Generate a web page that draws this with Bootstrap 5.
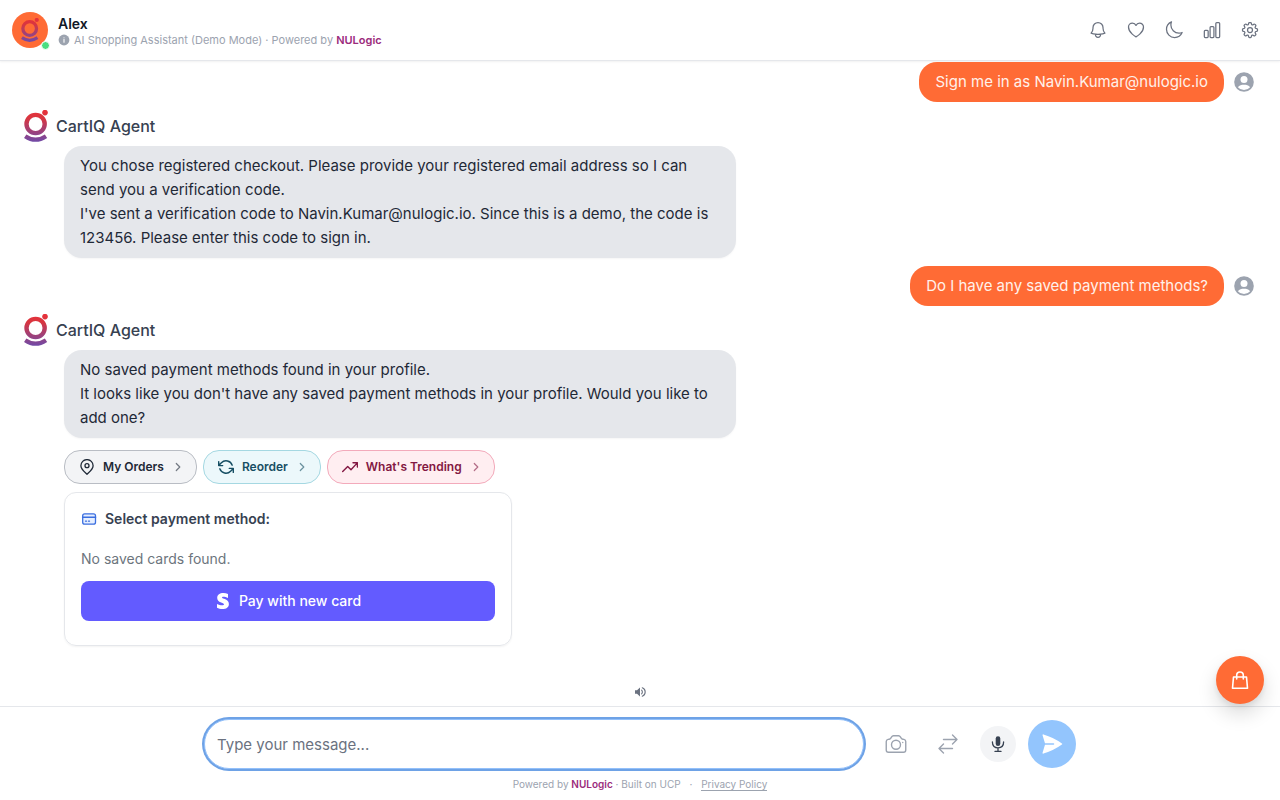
<!DOCTYPE html>
<html lang="en">
<head>
<meta charset="utf-8">
<meta name="viewport" content="width=device-width, initial-scale=1">
<title>CartIQ Agent</title>
<link href="https://cdn.jsdelivr.net/npm/bootstrap@5.3.0/dist/css/bootstrap.min.css" rel="stylesheet">
<style>
  body { font-family: Inter, "Liberation Sans", sans-serif; font-size: 15px; line-height: 24px; color: #1f2937; background: #fff; }
  svg { display: block; flex: none; fill: none; stroke: currentColor; stroke-linecap: round; stroke-linejoin: round; }
  button { font-family: inherit; }
  .icon-btn { border: 0; background: none; padding: 0; display: flex; align-items: center; justify-content: center; color: #6b7280; }
  .topbar { height: 61px; padding: 0 12px; border-bottom: 1px solid #e5e7eb; box-shadow: 0 1px 2px rgba(0,0,0,.06); }
  .identity { gap: 10px; }
  .topbar h1 { font-size: 14px; line-height: 20px; font-weight: 600; color: #111827; }
  .avatar { width: 36px; height: 36px; background: #ff6b35; }
  .online { right: -2px; bottom: -2px; width: 9px; height: 9px; background: #4ade80; border: 1px solid #fff; }
  .tagline { font-size: 11px; line-height: 12px; color: #9ca3af; gap: 4px; }
  .brand-name { color: #9b2c7c; font-weight: 600; }
  .top-tools { gap: 2px; }
  .top-tools .icon-btn { width: 36px; height: 36px; }
  .chat { padding: 1px 24px 0; gap: 8px; }
  .bubble { border-radius: 18px; padding: 8px 16px; }
  .bubble-user { background: #ff6b35; color: #fff1eb; }
  .bubble-agent { background: #e5e7eb; max-width: 672px; margin-top: 4px; box-shadow: 0 1px 2px rgba(0,0,0,.04); }
  .user-row { gap: 10px; padding-right: 2px; color: #9ca3af; }
  .agent-body { padding-left: 40px; }
  .agent-name { font-size: 16px; font-weight: 500; color: #374151; line-height: 32px; }
  .chips { gap: 6px; margin-top: 12px; }
  .chip { height: 34px; border: 1px solid; border-radius: 16px; padding: 0 12px 0 14px; font-size: 12px; line-height: 16px; font-weight: 600; display: flex; align-items: center; gap: 8px; }
  .chip-gray { background: #f3f4f6; border-color: #b9bdc4; color: #1f2937; }
  .chip-cyan { background: #ecf8fb; border-color: #a5d8e2; color: #164e63; }
  .chip-rose { background: #ffeef1; border-color: #f3aabb; color: #831843; }
  .chev { opacity: .6; }
  .pay-card { max-width: 448px; margin-top: 8px; border: 1px solid #e5e7eb; border-radius: 12px; padding: 16px 16px 24px; box-shadow: 0 1px 2px rgba(0,0,0,.05); font-size: 14px; line-height: 20px; }
  .pay-card h2 { font-size: 14px; line-height: 20px; font-weight: 600; color: #374151; }
  .card-icon { color: #3b6fe0; }
  .pay-btn { height: 40px; margin-top: 12px; border: 0; border-radius: 8px; background: #635bff; color: #fff; font-weight: 500; gap: 8px; }
  .composer { border-top: 1px solid #e5e7eb; padding: 12px 0 9px; }
  .composer form { max-width: 896px; padding: 0 12px; gap: 12px; }
  .composer input { height: 50px; min-width: 0; border: 1px solid #93c0fa; box-shadow: 0 0 0 2px #6ea2e6; border-radius: 25px; padding: 0 12px; outline: 0; color: #1f2937; }
  .composer input::placeholder { color: #6b7280; opacity: 1; }
  .tool { width: 40px; height: 40px; color: #9ca3af; }
  .mic { width: 36px; height: 36px; background: #f3f4f6; color: #374151; }
  .send { width: 48px; height: 48px; background: #93c5fd; color: #fff; }
  .legal { font-size: 10px; line-height: 14px; color: #9ca3af; margin-top: 8px; }
  .legal a { color: #9ca3af; text-decoration: none; border-bottom: 1px solid #9ca3af; }
  .legal .sep { margin: 0 6px; }
  .cart-fab { right: 16px; bottom: 96px; width: 48px; height: 48px; background: #ff6b35; color: #fff; box-shadow: 0 10px 20px rgba(0,0,0,.14), 0 3px 6px rgba(0,0,0,.08); }
</style>
</head>
<body class="d-flex flex-column min-vh-100">

<svg width="0" height="0" class="position-absolute" aria-hidden="true">
  <defs>
    <linearGradient id="brand" gradientUnits="userSpaceOnUse" x1="0" y1="0" x2="0" y2="32">
      <stop offset="0" stop-color="#e8313a"/><stop offset=".25" stop-color="#d9353f"/><stop offset="1" stop-color="#6f4aa8"/>
    </linearGradient>
    <symbol id="logo" viewBox="0 0 24 32">
      <circle cx="11.6" cy="14" r="9.1" stroke="url(#brand)" stroke-width="4.4"/>
      <circle cx="21" cy="2.6" r="2.8" fill="url(#brand)" stroke="none"/>
      <path d="M1.2 26.2Q11.5 33.2 22 26.2" stroke="url(#brand)" stroke-width="4.2" stroke-linecap="butt"/>
    </symbol>
    <symbol id="person" viewBox="0 0 20 20">
      <circle cx="10" cy="10" r="9.8" fill="#9ca3af" stroke="none"/>
      <circle cx="10" cy="7.6" r="3.5" fill="#fff" stroke="none"/>
      <path d="M3.9 15.2C5.2 13.2 7.6 12.7 10 12.7s4.800.5 6.100 2.500A8 8 0 0 1 3.900 15.200z" fill="#fff" stroke="none"/>
    </symbol>
    <symbol id="chev" viewBox="0 0 12 12"><path d="M4.300 2.500 7.800 6 4.300 9.500" stroke-width="1.200"/></symbol>
  </defs>
</svg>

<header class="topbar d-flex align-items-center justify-content-between">
  <div class="identity d-flex align-items-center">
    <div class="avatar rounded-circle position-relative d-flex align-items-center justify-content-center">
      <svg width="18" height="24"><use href="#logo"/></svg>
      <span class="online rounded-circle position-absolute"></span>
    </div>
    <div>
      <h1 class="m-0">Alex</h1>
      <div class="tagline d-flex align-items-center">
        <svg width="12" height="12" viewBox="0 0 12 12"><circle cx="6" cy="6" r="5.400" fill="#9ca3af" stroke="none"/><path d="M6 5.400v2.800M6 3.700v.1" stroke="#fff" stroke-width="1.100"/></svg>
        <span>AI Shopping Assistant (Demo Mode) · Powered by <span class="brand-name">NULogic</span></span>
      </div>
    </div>
  </div>
  <nav class="top-tools d-flex" aria-label="Tools">
    <button class="icon-btn" type="button" aria-label="Notifications"><svg width="20" height="20" viewBox="0 0 24 24" stroke-width="1.500"><path d="M14.857 17.082a23.848 23.848 0 0 0 5.454-1.310A8.967 8.967 0 0 1 18 9.750V9A6 6 0 0 0 6 9v.75a8.967 8.967 0 0 1-2.312 6.022c1.733.64 3.560 1.085 5.455 1.310m5.714 0a24.255 24.255 0 0 1-5.714 0m5.714 0a3 3 0 1 1-5.714 0"/></svg></button>
    <button class="icon-btn" type="button" aria-label="Favourites"><svg width="20" height="20" viewBox="0 0 24 24" stroke-width="1.500"><path d="M21 8.250c0-2.485-2.099-4.500-4.688-4.500-1.935 0-3.597 1.126-4.312 2.733-.715-1.607-2.377-2.733-4.313-2.733C5.100 3.750 3 5.765 3 8.250c0 7.220 9 12 9 12s9-4.780 9-12Z"/></svg></button>
    <button class="icon-btn" type="button" aria-label="Dark mode"><svg width="20" height="20" viewBox="0 0 24 24" stroke-width="1.500"><path d="M21.752 15.002A9.720 9.720 0 0 1 18 15.750c-5.385 0-9.750-4.365-9.750-9.750 0-1.330.266-2.597.748-3.752A9.753 9.753 0 0 0 3 11.250C3 16.635 7.365 21 12.750 21a9.753 9.753 0 0 0 9.002-5.998Z"/></svg></button>
    <button class="icon-btn" type="button" aria-label="Statistics"><svg width="20" height="20" viewBox="0 0 24 24" stroke-width="1.500"><rect x="2.800" y="12.500" width="4.600" height="8.500" rx="1.100"/><rect x="9.700" y="8" width="4.600" height="13" rx="1.100"/><rect x="16.600" y="3" width="4.600" height="18" rx="1.100"/></svg></button>
    <button class="icon-btn" type="button" aria-label="Settings"><svg width="20" height="20" viewBox="0 0 24 24" stroke-width="1.500"><path d="M10.343 3.940c.09-.542.560-.940 1.110-.940h1.093c.55 0 1.020.398 1.110.940l.149.894c.07.424.384.764.780.930.398.164.855.142 1.205-.108l.737-.527a1.125 1.125 0 0 1 1.450.120l.773.774c.39.389.440 1.002.120 1.450l-.527.737c-.25.350-.272.806-.107 1.204.165.397.505.710.930.780l.893.150c.543.090.940.560.940 1.109v1.094c0 .55-.397 1.020-.940 1.110l-.893.149c-.425.070-.765.383-.930.780-.165.398-.143.854.107 1.204l.527.738c.32.447.269 1.060-.120 1.450l-.774.773a1.125 1.125 0 0 1-1.449.120l-.738-.527c-.35-.25-.806-.272-1.203-.107-.397.165-.710.505-.781.929l-.149.894c-.09.542-.560.940-1.110.940h-1.094c-.55 0-1.019-.398-1.110-.940l-.148-.894c-.071-.424-.384-.764-.781-.930-.398-.164-.854-.142-1.204.108l-.738.527c-.447.320-1.060.269-1.450-.120l-.773-.774a1.125 1.125 0 0 1-.120-1.450l.527-.737c.25-.350.273-.806.108-1.204-.165-.397-.506-.710-.930-.780l-.894-.150c-.542-.090-.940-.560-.940-1.109v-1.094c0-.55.398-1.020.940-1.110l.894-.149c.424-.070.765-.383.930-.780.165-.398.142-.854-.108-1.204l-.526-.738a1.125 1.125 0 0 1 .120-1.450l.773-.773a1.125 1.125 0 0 1 1.450-.120l.737.527c.35.250.807.272 1.204.107.397-.165.710-.505.780-.929l.150-.894Z"/><circle cx="12" cy="12" r="3"/></svg></button>
  </nav>
</header>

<main class="chat d-flex flex-column flex-grow-1">
  <div class="user-row d-flex justify-content-end align-items-center">
    <div class="bubble bubble-user">Sign me in as Navin.Kumar@nulogic.io</div>
    <svg width="20" height="20"><use href="#person"/></svg>
  </div>
  <section>
    <div class="d-flex gap-2 agent-name"><svg width="24" height="32"><use href="#logo"/></svg>CartIQ Agent</div>
    <div class="agent-body">
      <div class="bubble bubble-agent">You chose registered checkout. Please provide your registered email address so I can send you a verification code.<br>I've sent a verification code to Navin.Kumar@nulogic.io. Since this is a demo, the code is 123456. Please enter this code to sign in.</div>
    </div>
  </section>
  <div class="user-row d-flex justify-content-end align-items-center">
    <div class="bubble bubble-user">Do I have any saved payment methods?</div>
    <svg width="20" height="20"><use href="#person"/></svg>
  </div>
  <section>
    <div class="d-flex gap-2 agent-name"><svg width="24" height="32"><use href="#logo"/></svg>CartIQ Agent</div>
    <div class="agent-body">
      <div class="bubble bubble-agent">No saved payment methods found in your profile.<br>It looks like you don't have any saved payment methods in your profile. Would you like to add one?</div>
      <div class="chips d-flex flex-wrap">
        <button class="chip chip-gray" type="button"><svg width="16" height="16" viewBox="0 0 16 16" stroke-width="1.300"><path d="M8 15.300C5.500 12.900 1.900 10.100 1.900 6.700a6.100 6.100 0 0 1 12.200 0c0 3.400-3.600 6.200-6.100 8.600z"/><circle cx="8" cy="6.700" r="2"/></svg>My Orders<svg class="chev" width="12" height="12"><use href="#chev"/></svg></button>
        <button class="chip chip-cyan" type="button"><svg width="16" height="16" viewBox="0 0 16 16" stroke-width="1.400"><path d="M.7 2.600v4h4M15.300 13.400v-4h-4M14.200 6.200A6.500 6.500 0 0 0 3.400 3.800L.7 6.600M15.300 9.400l-2.700 2.800A6.500 6.500 0 0 1 1.800 9.800"/></svg>Reorder<svg class="chev" width="12" height="12"><use href="#chev"/></svg></button>
        <button class="chip chip-rose" type="button"><svg width="16" height="16" viewBox="0 0 16 16" stroke-width="1.400"><path d="M.7 12.500 5.700 7.500 9 10.800l6.300-6.900M11 3.700h4.400v4.400"/></svg>What's Trending<svg class="chev" width="12" height="12"><use href="#chev"/></svg></button>
      </div>
      <div class="pay-card">
        <div class="d-flex align-items-center gap-2 mb-3 pb-1">
          <svg class="card-icon" width="16" height="16" viewBox="0 0 16 16" stroke-width="1.300"><rect x="1.700" y="2.800" width="12.800" height="10.400" rx="2" fill="#e6efff"/><path d="M1.700 6.200h12.800" stroke-width="1.600"/><path d="M4.500 10.200h1M7.500 10.200h1"/></svg>
          <h2 class="m-0">Select payment method:</h2>
        </div>
        <p class="mb-0 text-secondary">No saved cards found.</p>
        <button class="pay-btn w-100 d-flex align-items-center justify-content-center" type="button"><svg width="16" height="20" viewBox="0 0 16 20"><path d="M13 3v4C11.500 6.200 9.500 5.700 8.400 5.700 7.400 5.700 7 6 7 6.500 7 8 13.900 7.700 13.900 12.900 13.900 16.300 11.200 18 7.400 18 5.500 18 3.400 17.600 2 16.800V12.900C3.500 13.700 5.700 14.300 7.200 14.300 8.300 14.300 9 14 9 13.300 9 11.500 2.200 11.900 2.200 7 2.200 3.800 4.800 2 8.400 2 10 2 11.600 2.300 13 3z" fill="#fff" stroke="none"/></svg>Pay with new card</button>
      </div>
    </div>
  </section>
  <button class="icon-btn mx-auto mt-auto mb-2" type="button" aria-label="Toggle sound"><svg width="12" height="12" viewBox="0 0 12 12"><path d="M1 4.300h2L6 1.500v9L3 7.700H1z" fill="currentColor" stroke="none"/><path d="M7.600 4.200a2.500 2.500 0 0 1 0 3.600M8.300 1.800a4.500 4.500 0 0 1 0 8.400" stroke-width="1.100"/></svg></button>
</main>

<footer class="composer">
  <form class="d-flex align-items-center mx-auto">
    <input class="flex-grow-1" type="text" placeholder="Type your message..." aria-label="Message">
    <button class="icon-btn tool" type="button" aria-label="Camera"><svg width="24" height="24" viewBox="0 0 24 24" stroke-width="1.400"><path d="M6.827 6.175A2.310 2.310 0 0 1 5.186 7.230c-.380.054-.757.112-1.134.175C2.999 7.580 2.250 8.507 2.250 9.574V18a2.250 2.250 0 0 0 2.250 2.250h15A2.250 2.250 0 0 0 21.750 18V9.574c0-1.067-.750-1.994-1.802-2.169a47.865 47.865 0 0 0-1.134-.175 2.310 2.310 0 0 1-1.640-1.055l-.822-1.316a2.192 2.192 0 0 0-1.736-1.039 48.774 48.774 0 0 0-5.232 0 2.192 2.192 0 0 0-1.736 1.039l-.821 1.316ZM16.500 12.750a4.500 4.500 0 1 1-9 0 4.500 4.500 0 0 1 9 0ZM18.750 10.500h.008v.008h-.008V10.500Z"/></svg></button>
    <button class="icon-btn tool" type="button" aria-label="Compare"><svg width="24" height="24" viewBox="0 0 24 24" stroke-width="1.400"><path d="M7.500 21 3 16.500m0 0L7.500 12M3 16.500h13.500m0-13.500L21 7.500m0 0L16.500 12M21 7.500H7.500"/></svg></button>
    <button class="icon-btn mic rounded-circle" type="button" aria-label="Voice input"><svg width="20" height="20" viewBox="0 0 20 20"><rect x="7.700" y="2.200" width="4.600" height="9.800" rx="2.300" fill="currentColor" stroke="none"/><path d="M4.400 8c0 4.200 2.300 5.800 5.600 5.800s5.600-1.600 5.600-5.800M10 13.800v3.400M7 17.400h6" stroke-width="1.300"/></svg></button>
    <button class="icon-btn send rounded-circle" type="submit" aria-label="Send"><svg width="24" height="24" viewBox="0 0 24 24"><path d="M3.478 2.404a.75.75 0 0 0-.926.941l2.432 7.905H13.500a.75.75 0 0 1 0 1.500H4.984l-2.432 7.905a.75.75 0 0 0 .926.940 60.519 60.519 0 0 0 18.445-8.986.75.75 0 0 0 0-1.218A60.517 60.517 0 0 0 3.478 2.404Z" fill="currentColor" stroke="none"/></svg></button>
  </form>
  <div class="legal text-center">Powered by <span class="brand-name">NULogic</span> · Built on UCP <span class="sep">·</span> <a href="#">Privacy Policy</a></div>
</footer>

<button class="cart-fab icon-btn rounded-circle position-fixed" type="button" aria-label="Shopping bag"><svg width="20" height="20" viewBox="0 0 20 20" stroke-width="1.600"><path d="M3.500 7h13l1 11.200h-15zM6.700 9V5.300a3.300 3.300 0 0 1 6.600 0V9"/></svg></button>

<script src="https://cdn.jsdelivr.net/npm/bootstrap@5.3.0/dist/js/bootstrap.bundle.min.js"></script>
</body>
</html>
